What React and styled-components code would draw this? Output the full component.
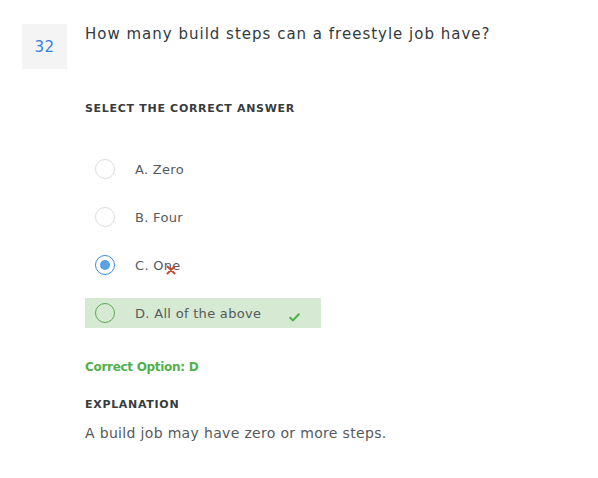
import React from "react";
import styled, { createGlobalStyle } from "styled-components";

const GlobalStyle = createGlobalStyle`
  body {
    margin: 0;
    background: #ffffff;
    font-family: "DejaVu Sans", "Open Sans", sans-serif;
  }
`;

const Page = styled.div`
  padding: 24px 0 0 22px;
`;

const Header = styled.div`
  display: flex;
  align-items: flex-start;
  gap: 18px;
`;

const Number = styled.div`
  width: 45px;
  height: 45px;
  background: #f4f4f4;
  color: #3a7fe0;
  font-size: 15px;
  letter-spacing: 0.5px;
  display: flex;
  align-items: center;
  justify-content: center;
`;

const Question = styled.div`
  font-size: 15px;
  color: #333a40;
  letter-spacing: 1px;
  line-height: 22px;
  margin-top: -1px;
`;

const Content = styled.div`
  margin-left: 63px;
`;

const Label = styled.div`
  font-size: 11px;
  font-weight: 700;
  color: #383c40;
  letter-spacing: 0.7px;
  line-height: 14px;
  margin-top: ${(p) => p.$top}px;
`;

const Options = styled.div`
  display: flex;
  flex-direction: column;
  gap: 18px;
  margin-top: 38px;
`;

const Row = styled.div`
  position: relative;
  width: 236px;
  height: 30px;
  display: flex;
  align-items: center;
  gap: 20px;
  padding-left: 10px;
  box-sizing: border-box;
  background: ${(p) => (p.$correct ? "#d6e9d2" : "transparent")};
`;

const Radio = styled.div`
  width: 20px;
  height: 20px;
  box-sizing: border-box;
  border-radius: 50%;
  border: 1px solid
    ${(p) => (p.$state === "selected" ? "#3b8be6" : p.$state === "correct" ? "#5aa950" : "#dddddd")};
  background: ${(p) => (p.$state === "correct" ? "transparent" : "#fff")};
  display: flex;
  align-items: center;
  justify-content: center;
  &::after {
    content: "";
    display: ${(p) => (p.$state === "selected" ? "block" : "none")};
    width: 10px;
    height: 10px;
    border-radius: 50%;
    background: #5aa3e3;
  }
`;

const OptionText = styled.span`
  position: relative;
  font-size: 13px;
  letter-spacing: 0.3px;
  color: #555a5e;
`;

const Cross = styled.svg`
  position: absolute;
  left: 31px;
  top: 7px;
`;

const Check = styled.svg`
  position: absolute;
  left: 204px;
  top: 15px;
`;

const CorrectOption = styled.div`
  margin-top: 31px;
  font-size: 12px;
  font-weight: 700;
  letter-spacing: -0.3px;
  color: #52b04c;
  line-height: 16px;
`;

const Explanation = styled.div`
  margin-top: 11px;
  font-size: 14px;
  letter-spacing: 0.33px;
  color: #55595d;
  line-height: 20px;
`;

const options = [
  { key: "A", text: "Zero" },
  { key: "B", text: "Four" },
  { key: "C", text: "One", state: "selected", wrong: true },
  { key: "D", text: "All of the above", state: "correct" },
];

export default function App() {
  return (
    <Page>
      <GlobalStyle />
      <Header>
        <Number>32</Number>
        <Question>How many build steps can a freestyle job have?</Question>
      </Header>
      <Content>
        <Label $top={33}>SELECT THE CORRECT ANSWER</Label>
        <Options>
          {options.map((o) => (
            <Row key={o.key} $correct={o.state === "correct"}>
              <Radio $state={o.state} />
              <OptionText>
                {o.key}. {o.text}
                {o.wrong && (
                  <Cross width="10" height="10" viewBox="0 0 10 10">
                    <path d="M1.5 1.5 L8.5 8.5 M8.5 1.5 L1.5 8.5" stroke="#cc4a2e" strokeWidth="2" strokeLinecap="round" />
                  </Cross>
                )}
              </OptionText>
              {o.state === "correct" && (
                <Check width="11" height="9" viewBox="0 0 11 9">
                  <path d="M1.2 4.8 L4 7.4 L9.8 1.3" fill="none" stroke="#4fae4a" strokeWidth="2" strokeLinecap="round" strokeLinejoin="round" />
                </Check>
              )}
            </Row>
          ))}
        </Options>
        <CorrectOption>Correct Option: D</CorrectOption>
        <Label $top={23}>EXPLANATION</Label>
        <Explanation>A build job may have zero or more steps.</Explanation>
      </Content>
    </Page>
  );
}
